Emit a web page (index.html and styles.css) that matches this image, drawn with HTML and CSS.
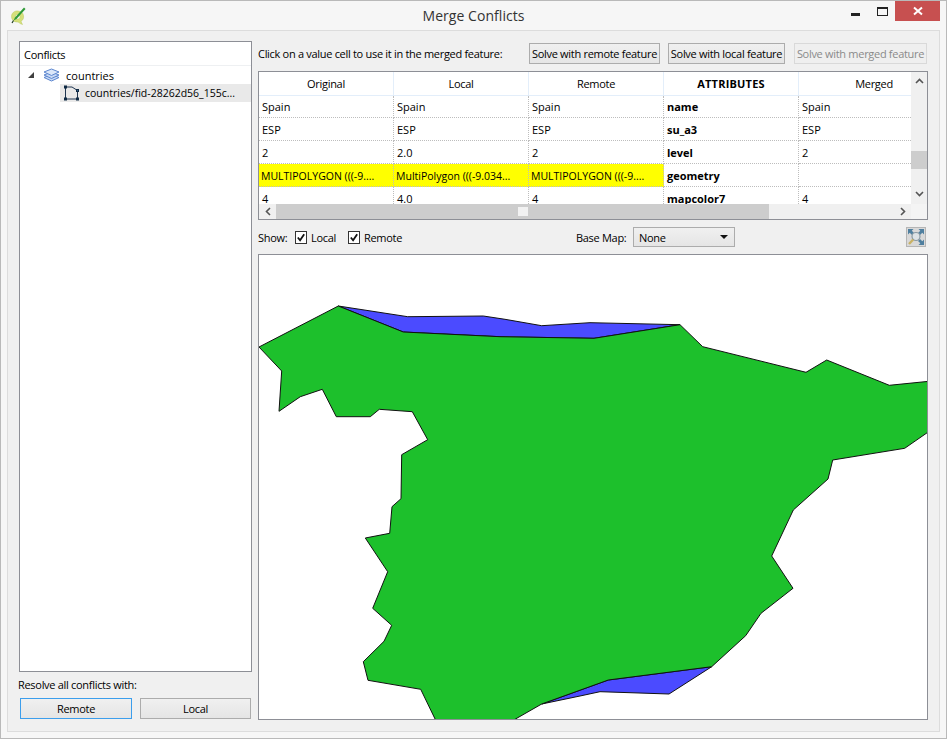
FILE: index.html
```html
<!DOCTYPE html>
<html lang="en">
<head>
<meta charset="utf-8">
<title>Merge Conflicts</title>
<link rel="stylesheet" href="styles.css">
</head>
<body>
<div class="window">
  <header class="titlebar">
    <svg class="app-icon" viewBox="0 0 16 18" width="16" height="18">
      <path d="M8 4C4.500 3.500 1.500 6 1.500 9.500 1.500 13 4 15 7 15c1.500 0 2 .5 3 1.500l2.500 1 -1.500-3c2-1.500 3-3.500 2.500-6C13 5.500 11 4.500 8 4zM7.500 7.500c2 0 2.500 1 2.500 2.500s-1 2-2.500 2S5.500 11 5.500 9.500 6 7.500 7.500 7.500z" fill="#d5e07a" stroke="#b9c75e" stroke-width=".5"/>
      <path d="M14 0.500 15.500 2 6.500 12 3.500 13.500 5 10.500z" fill="#2f9a37"/>
      <path d="M3.500 13.500 2 16" stroke="#1c3d1e" stroke-width="1.200"/>
    </svg>
    <div class="title">Merge Conflicts</div>
    <div class="controls">
      <span class="ctl-min"></span>
      <span class="ctl-max"></span>
      <span class="ctl-close">
        <svg viewBox="0 0 10 10" width="10" height="10"><path d="M1 1.500 9 8.500M9 1.500 1 8.500" stroke="#fff" stroke-width="2"/></svg>
      </span>
    </div>
  </header>

  <main class="panel">
    <aside class="left">
      <section class="tree">
        <div class="tree-head">Conflicts</div>
        <div class="tree-row">
          <span class="twist"></span>
          <svg class="layer-icon" viewBox="0 0 17 14" width="17" height="14">
            <path d="M8.500 6.500 16 9.500 8.500 13 1 9.500z" fill="#c9daf5" stroke="#5c86cf"/>
            <path d="M8.500 4 16 7 8.500 10.500 1 7z" fill="#c9daf5" stroke="#5c86cf"/>
            <path d="M8.500 1 16 4 8.500 7.500 1 4z" fill="#dbe7f9" stroke="#5c86cf"/>
          </svg>
          <span>countries</span>
        </div>
        <div class="tree-row child">
          <div class="child-sel">
            <svg class="poly-icon" viewBox="0 0 17 16" width="17" height="16">
              <path d="M2.500 2H9L14.500 5.500V14H2.500z" fill="none" stroke="#1f3550"/>
              <g fill="#2f5f8f" stroke="#0f2a44">
                <rect x="1.500" y="1" width="2" height="2"/>
                <rect x="13.500" y="4.500" width="2" height="2"/>
                <rect x="13.500" y="13" width="2" height="2"/>
                <rect x="1.500" y="13" width="2" height="2"/>
              </g>
            </svg>
            <span>countries/fid-28262d56_155c...</span>
          </div>
        </div>
      </section>
      <div class="resolve-label">Resolve all conflicts with:</div>
      <div class="resolve-buttons">
        <button class="btn focus">Remote</button>
        <button class="btn">Local</button>
      </div>
    </aside>

    <section class="right">
      <div class="toolbar">
        <span class="hint">Click on a value cell to use it in the merged feature:</span>
        <button class="btn solve-remote">Solve with remote feature</button>
        <button class="btn solve-local">Solve with local feature</button>
        <button class="btn solve-merged" disabled>Solve with merged feature</button>
      </div>

      <div class="table-box">
        <div class="table-top">
          <div class="grid-clip">
            <div class="grid">
              <div class="th">Original</div><div class="th">Local</div><div class="th">Remote</div><div class="th strong">ATTRIBUTES</div><div class="th last">Merged</div>
              <div class="td">Spain</div><div class="td">Spain</div><div class="td">Spain</div><div class="td strong">name</div><div class="td">Spain</div>
              <div class="td">ESP</div><div class="td">ESP</div><div class="td">ESP</div><div class="td strong">su_a3</div><div class="td">ESP</div>
              <div class="td">2</div><div class="td">2.0</div><div class="td">2</div><div class="td strong">level</div><div class="td">2</div>
              <div class="td hl">MULTIPOLYGON (((-9....</div><div class="td hl">MultiPolygon (((-9.034...</div><div class="td hl">MULTIPOLYGON (((-9....</div><div class="td strong">geometry</div><div class="td"></div>
              <div class="td">4</div><div class="td">4.0</div><div class="td">4</div><div class="td strong">mapcolor7</div><div class="td">4</div>
            </div>
          </div>
          <div class="vscroll">
            <svg viewBox="0 0 9 6" width="9" height="6"><path d="M1 5 4.500 1.500 8 5" fill="none" stroke="#555" stroke-width="1.600"/></svg>
            <div class="vthumb"></div>
            <svg class="down" viewBox="0 0 9 6" width="9" height="6"><path d="M1 1 4.500 4.500 8 1" fill="none" stroke="#555" stroke-width="1.600"/></svg>
          </div>
        </div>
        <div class="hscroll">
          <svg class="arrow-l" viewBox="0 0 6 9" width="6" height="9"><path d="M5 1 1.500 4.500 5 8" fill="none" stroke="#555" stroke-width="1.600"/></svg>
          <div class="hthumb"><span class="grip"></span></div>
          <svg class="arrow-r" viewBox="0 0 6 9" width="6" height="9"><path d="M1 1 4.500 4.500 1 8" fill="none" stroke="#555" stroke-width="1.600"/></svg>
          <div class="corner"></div>
        </div>
      </div>

      <div class="options">
        <span class="show">Show:</span>
        <label class="check first"><span class="box"><svg viewBox="0 0 11 11" width="11" height="11"><path d="M2 5.500 4.500 8.500 9 2" fill="none" stroke="#111" stroke-width="2"/></svg></span>Local</label>
        <label class="check second"><span class="box"><svg viewBox="0 0 11 11" width="11" height="11"><path d="M2 5.500 4.500 8.500 9 2" fill="none" stroke="#111" stroke-width="2"/></svg></span>Remote</label>
        <span class="basemap">Base Map:</span>
        <div class="combo"><span>None</span><span class="caret"></span></div>
        <button class="zoom-btn" aria-label="Zoom full">
          <svg viewBox="0 0 18 18" width="18" height="18">
            <g fill="#4f7f9f">
              <path d="M1 1H6.500L4.800 2.700 7 5 5 7 2.700 4.800 1 6.500z"/>
              <path d="M17 1V6.500L15.300 4.800 13 7 11 5 13.300 2.700 11.500 1z"/>
              <path d="M17 17H11.500L13.300 15.300 11 13 13 11 15.300 13.300 17 11.500z"/>
            </g>
            <circle cx="9" cy="8.500" r="4" fill="#dde3e6" stroke="#8b9aa3" stroke-width="1.200"/>
            <path d="M6.200 11.500 2 16" stroke="#c9b265" stroke-width="2.400"/>
          </svg>
        </button>
      </div>

      <div class="map">
        <svg viewBox="259 255 668 464" width="668" height="464">
          <polygon class="diff" points="338.300,306 407.700,316.700 483.300,316 505,319.300 541.700,325.700 590,322.700 680,324.700 594,338.300 500,336.700 403.300,332"/>
          <polygon class="diff" points="711.700,666.700 669,694 600,691.700 580,696 541.700,704 608.300,680"/>
          <polygon class="land" points="259,347 338.300,306 403.300,332 500,336.700 594,338.300 680,324.700 702.700,346.700 806,372.300 826.700,360 889.300,385.300 935,380.700 935,427.300 904.700,448.300 832.700,460 828,479 793.300,510 771.700,556 793,588.300 761,613.300 745.700,635.700 711.700,666.700 608.300,680 541.700,704 505,725 438,725 420.700,689.300 368,680.300 363.300,661.700 384,641.300 391.700,625.300 372.700,608.300 387.700,571.700 365.300,538 389.700,533.300 392,506.700 401,498.700 401.700,454.700 427.700,439.700 412.300,411.700 379.300,409.300 370.300,416.700 336.300,416.700 322.300,389.300 300.300,396.700 279,411.300 281.700,371"/>
        </svg>
      </div>
    </section>
  </main>
</div>
</body>
</html>
```

FILE: styles.css
```css
* { box-sizing: border-box; }

html, body {
  margin: 0;
  padding: 0;
  background: #f5f5f5;
}

body {
  font-family: "Open Sans", "Noto Sans", "Liberation Sans", sans-serif;
  font-size: 11px;
  letter-spacing: -0.3px;
  color: #000;
}

.window {
  width: 947px;
  height: 739px;
  border: 1px solid #b9b9b9;
  background: #f6f6f6;
  display: flex;
  flex-direction: column;
  padding: 0 6px 6px;
}

/* Title bar */
.titlebar {
  height: 29px;
  flex: none;
  display: flex;
  align-items: flex-start;
  position: relative;
}

.app-icon {
  margin: 6px 0 0 3px;
}

.title {
  position: absolute;
  left: 0;
  right: 0;
  top: 5px;
  text-align: center;
  font-size: 14px;
  line-height: 20px;
  letter-spacing: 0.05px;
  color: #333;
}

.controls {
  margin-left: auto;
  display: flex;
  align-items: flex-start;
}

.ctl-min {
  width: 9px;
  height: 3px;
  margin: 12px 17px 0 0;
  background: #222;
}

.ctl-max {
  width: 11px;
  height: 9px;
  margin: 6px 7px 0 0;
  border: 1px solid #222;
  border-top-width: 2px;
}

.ctl-close {
  width: 45px;
  height: 20px;
  background: #c75050;
  display: flex;
  align-items: center;
  justify-content: center;
}

/* Main panel */
.panel {
  flex: 1;
  min-height: 0;
  border: 1px solid #dcdcdc;
  background: #f0f0f0;
  display: flex;
  gap: 6px;
  padding: 10px 11px 11px;
}

.left {
  width: 233px;
  flex: none;
  display: flex;
  flex-direction: column;
}

.tree {
  flex: 1;
  border: 1px solid #8d8f96;
  background: #fff;
}

.tree-head {
  height: 24px;
  padding-left: 4px;
  line-height: 26px;
  border-bottom: 1px solid #eef0f2;
}

.tree-row {
  height: 18px;
  display: flex;
  align-items: center;
  letter-spacing: 0;
}

.twist {
  width: 0;
  height: 0;
  margin-left: 8px;
  border-style: solid;
  border-width: 0 0 6px 6px;
  border-color: transparent transparent #404040 transparent;
}

.layer-icon {
  margin: 0 6px 0 9px;
}

.child {
  padding-left: 40px;
}

.child-sel {
  flex: 1;
  height: 18px;
  background: #e9e9e9;
  display: flex;
  align-items: center;
  gap: 5px;
  padding-left: 3px;
  font-size: 10.500px;
  white-space: nowrap;
}

.resolve-label {
  height: 26px;
  line-height: 26px;
  margin-left: -1px;
}

.resolve-buttons {
  display: flex;
  gap: 8px;
  padding: 0 1px 1px 1px;
}

.btn {
  height: 21px;
  padding: 0;
  font: inherit;
  letter-spacing: -0.3px;
  color: #000;
  border: 1px solid #acacac;
  background: linear-gradient(#f0f0f0, #e5e5e5);
  white-space: nowrap;
}

.resolve-buttons .btn {
  width: 111px;
}

.resolve-buttons .focus {
  width: 112px;
  border-color: #3c9eec;
}

/* Right column */
.right {
  flex: 1;
  min-width: 0;
  display: flex;
  flex-direction: column;
  gap: 7px;
}

.toolbar {
  height: 23px;
  flex: none;
  padding-top: 2px;
  display: flex;
  align-items: center;
}

.hint {
  margin-right: auto;
}

.solve-remote {
  width: 131px;
}

.solve-local {
  width: 117px;
  margin-left: 8px;
}

.solve-merged {
  width: 133px;
  margin: 0 1px 0 9px;
  color: #8a8a8a;
  border-color: #d9d9d9;
  background: #efefef;
}

.table-box {
  height: 149px;
  flex: none;
  border: 1px solid #8d8f96;
  background: #fff;
  display: flex;
  flex-direction: column;
}

.table-top {
  flex: 1;
  min-height: 0;
  display: flex;
}

.grid-clip {
  width: 652px;
  overflow: hidden;
}

.grid {
  width: 690px;
  display: grid;
  grid-template-columns: 135px 135px 135px 135px 150px;
  grid-template-rows: 24px 22px repeat(4, 23px);
}

.th {
  display: flex;
  align-items: center;
  justify-content: center;
  background: #fff;
  border-right: 1px solid #e3eefa;
  border-bottom: 1px solid #e3eefa;
}

.th.last {
  border-right: 0;
}

.th.strong {
  letter-spacing: 0.2px;
}

.td {
  display: flex;
  align-items: center;
  padding-left: 3px;
  white-space: nowrap;
  overflow: hidden;
  letter-spacing: 0;
  border-right: 1px dotted #bdbdbd;
  border-bottom: 1px dotted #bdbdbd;
}

.hl {
  background: #ff0;
  font-size: 10.500px;
  padding: 1px 0 0 2px;
}

.strong {
  font-weight: 700;
}

.vscroll {
  width: 16px;
  flex: none;
  background: #f0f0f0;
  display: flex;
  flex-direction: column;
  align-items: center;
  padding-top: 6px;
}

.vthumb {
  width: 16px;
  height: 18px;
  margin-top: 67px;
  background: #cdcdcd;
}

.vscroll .down {
  margin-top: 22px;
}

.hscroll {
  height: 15px;
  flex: none;
  background: #f0f0f0;
  display: flex;
  align-items: center;
}

.arrow-l {
  margin: 0 5px 0 6px;
  flex: none;
}

.hthumb {
  width: 493px;
  height: 15px;
  background: #cdcdcd;
  display: flex;
  align-items: center;
  justify-content: center;
  flex: none;
}

.grip {
  width: 10px;
  height: 9px;
  background: #f2f2f2;
}

.arrow-r {
  margin-left: 131px;
  flex: none;
}

.corner {
  width: 16px;
  height: 15px;
  margin-left: auto;
  background: #f4f4f4;
}

/* Options row */
.options {
  height: 20px;
  flex: none;
  display: flex;
  align-items: center;
}

.show {
  width: 37px;
}

.check {
  display: flex;
  align-items: center;
  gap: 4px;
}

.check.first {
  width: 53px;
}

.check.second {
  width: 70px;
}

.box {
  width: 12px;
  height: 13px;
  border: 1px solid #333;
  background: #fff;
  display: flex;
  align-items: center;
  justify-content: center;
}

.basemap {
  width: 57px;
  margin-left: 158px;
}

.combo {
  width: 102px;
  height: 20px;
  padding: 0 4px 0 5px;
  border: 1px solid #acacac;
  background: linear-gradient(#f0f0f0, #e5e5e5);
  display: flex;
  align-items: center;
  justify-content: space-between;
}

.caret {
  width: 0;
  height: 0;
  margin-right: 2px;
  border-style: solid;
  border-width: 4px 4px 0 4px;
  border-color: #111 transparent transparent transparent;
}

.zoom-btn {
  width: 20px;
  height: 20px;
  margin-left: auto;
  margin-right: 2px;
  padding: 0;
  border: 1px solid #b5b5b5;
  background: #d9d9d9;
}

.zoom-btn svg {
  display: block;
}

/* Map canvas */
.map {
  flex: 1;
  min-height: 0;
  border: 1px solid #8d8f96;
  background: #fff;
  overflow: hidden;
}

.map svg {
  display: block;
}

.land {
  fill: #1dc02c;
  stroke: #111;
  stroke-width: 1;
}

.diff {
  fill: #4b4bff;
  stroke: #111;
  stroke-width: 1;
}
```
